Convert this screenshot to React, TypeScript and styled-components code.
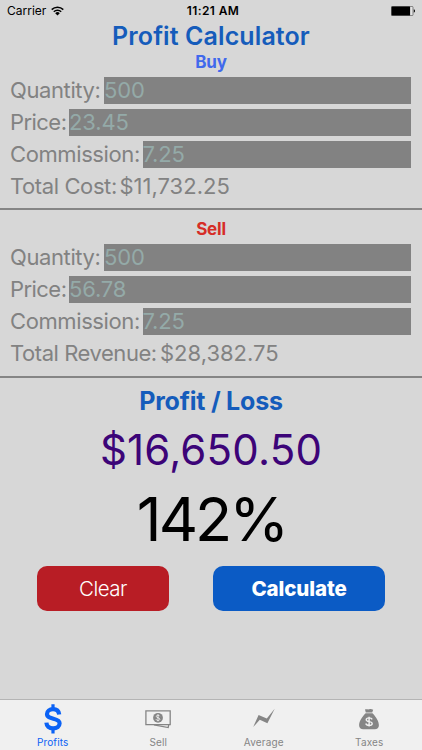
import React, { useState, FC } from "react";
import styled, { createGlobalStyle } from "styled-components";

const GlobalStyle = createGlobalStyle`
  * {
    box-sizing: border-box;
  }
  body {
    margin: 0;
    background: #d7d7d7;
    font-family: Inter, "Liberation Sans", sans-serif;
  }
`;

interface IField {
  label: string;
  value: string;
  labelWidth: number;
  spacing: number;
}

const Screen = styled.div`
  display: flex;
  flex-direction: column;
  width: 422px;
  height: 750px;
  overflow: hidden;
  background: #d7d7d7;
`;

const StatusBar = styled.header`
  display: grid;
  grid-template-columns: 1fr auto 1fr;
  align-items: center;
  height: 22px;
  padding: 0 6px 0 7px;
  font-size: 12px;
  line-height: 22px;
  color: #000;
`;

const Carrier = styled.div`
  display: flex;
  align-items: center;
  gap: 5px;
  letter-spacing: 0;
`;

const Clock = styled.div`
  padding-left: 3px;
  font-weight: 600;
  letter-spacing: 0.4px;
`;

const Battery = styled.div`
  display: flex;
  justify-content: flex-end;
`;

const Title = styled.h1`
  margin: 0;
  height: 29px;
  font-size: 25px;
  font-weight: 600;
  line-height: 29px;
  letter-spacing: 0.1px;
  text-align: center;
  white-space: nowrap;
  color: #155cbb;
`;

const ResultTitle = styled.h2`
  margin: 0;
  height: 29px;
  font-size: 25px;
  font-weight: 700;
  line-height: 29px;
  letter-spacing: -0.2px;
  text-align: center;
  color: #155cbb;
`;

const Heading = styled.h2<{ $color: string }>`
  margin: 0;
  height: 21px;
  padding-top: 1px;
  font-size: 17px;
  font-weight: 700;
  line-height: 21px;
  letter-spacing: -0.2px;
  text-align: center;
  color: ${(p) => p.$color};
`;

const Section = styled.section<{ $top: number; $bottom: number }>`
  padding: ${(p) => p.$top}px 0 ${(p) => p.$bottom}px;
  border-bottom: 2px solid #858585;
`;

const Rows = styled.div`
  display: flex;
  flex-direction: column;
  gap: 5px;
  padding: 5px 11px 0 10px;
`;

const Row = styled.div`
  display: flex;
  height: 27px;
  font-size: 22px;
  line-height: 27px;
  white-space: nowrap;
  color: #828282;
`;

const Label = styled.span<{ $width: number; $spacing: number }>`
  flex: none;
  width: ${(p) => p.$width}px;
  letter-spacing: ${(p) => p.$spacing}px;
`;

const Input = styled.span`
  flex: 1;
  background: #828282;
  color: #94aaa8;
  letter-spacing: -0.15px;
`;

const Total = styled.span`
  letter-spacing: 0;
`;

const Result = styled.section`
  display: flex;
  flex-direction: column;
  padding-top: 9px;
`;

const Amount = styled.div`
  height: 67px;
  font-size: 42px;
  line-height: 67px;
  letter-spacing: 0.2px;
  text-align: center;
  color: #3c0478;
`;

const Percent = styled.div`
  height: 72px;
  padding-left: 1px;
  font-size: 61px;
  line-height: 72px;
  letter-spacing: -3px;
  text-align: center;
  color: #000;
`;

const Buttons = styled.div`
  display: flex;
  justify-content: space-between;
  padding: 11px 37px 0;
`;

const Button = styled.button<{ $primary?: boolean }>`
  width: ${(p) => (p.$primary ? 172 : 132)}px;
  height: 45px;
  padding: 0;
  border: 0;
  border-radius: 10px;
  background: ${(p) => (p.$primary ? "#0b5bc5" : "#b81d25")};
  color: #fff;
  font-family: inherit;
  font-size: 20.5px;
  font-weight: ${(p) => (p.$primary ? 800 : 300)};
  letter-spacing: ${(p) => (p.$primary ? -0.1 : -0.5)}px;
  cursor: pointer;
`;

const TabBar = styled.nav`
  display: grid;
  grid-template-columns: repeat(4, 1fr);
  height: 51px;
  margin-top: auto;
  border-top: 1px solid #b4b4b4;
  background: #f0f0f0;
`;

const Tab = styled.button<{ $active: boolean }>`
  display: flex;
  flex-direction: column;
  align-items: center;
  padding: 3px 0 0;
  border: 0;
  background: transparent;
  color: ${(p) => (p.$active ? "#0b62f5" : "#858585")};
  font-family: inherit;
  font-size: 10px;
  line-height: 15px;
  letter-spacing: 0.15px;
  cursor: pointer;
`;

const TabIcon = styled.svg`
  display: block;
  width: 32px;
  height: 32px;
`;

const Field: FC<IField> = ({ label, value, labelWidth, spacing }) => {
  return (
    <Row>
      <Label $width={labelWidth} $spacing={spacing}>
        {label}
      </Label>
      <Input>{value}</Input>
    </Row>
  );
};

const WifiIcon = () => (
  <svg width="13" height="10" viewBox="0 0 13 10">
    <g fill="none" stroke="#000" strokeWidth="1.5">
      <path d="M.7 3.6a8.2 8.2 0 0 1 11.6 0" />
      <path d="M2.8 5.8a5.2 5.2 0 0 1 7.4 0" />
    </g>
    <path d="M6.5 9.6 4.2 7.2a3.3 3.3 0 0 1 4.6 0z" />
  </svg>
);

const BatteryIcon = () => (
  <svg width="25" height="10" viewBox="0 0 25 10">
    <rect x=".4" y=".4" width="21.6" height="9.2" rx="1" fill="#e4e4e4" stroke="#555" strokeWidth=".7" />
    <rect x=".5" y=".5" width="18.6" height="9" rx=".6" />
    <path d="M22.8 3.3c1.6.3 1.6 3.1 0 3.4z" />
  </svg>
);

const DollarIcon = () => (
  <TabIcon viewBox="0 0 32 32">
    <path
      d="M22.2 11.5C21.8 8.4 19.5 6.2 16 6.2s-6 2-6 4.8c0 6.3 12.6 3.2 12.6 9.3 0 3.1-2.7 5.1-6.5 5.1-4 0-6.5-2.2-6.7-5.7"
      fill="none"
      stroke="currentColor"
      strokeWidth="4.2"
    />
    <path d="M14.4 1.3h3.2v5h-3.2zM14.4 25h3.2v5.6h-3.2z" fill="currentColor" />
  </TabIcon>
);

const CashIcon = () => (
  <TabIcon viewBox="0 0 32 32">
    <g fill="none" stroke="currentColor" strokeWidth="1.3">
      <path d="M3.9 7.9h24.3v13.8H3.9z" />
      <path d="M12 21.9l14.2 2.7.5-2.8" />
    </g>
    <circle cx="16" cy="14.8" r="4.9" fill="currentColor" />
    <path
      d="M17.7 13.2c-.3-.8-1-1-1.8-1s-1.6.4-1.6 1.2c0 1.8 3.5.9 3.5 2.8 0 .8-.8 1.3-1.8 1.3s-1.8-.5-1.9-1.4M16 11.3v7"
      fill="none"
      stroke="#f0f0f0"
      strokeWidth=".9"
    />
  </TabIcon>
);

const TrendIcon = () => (
  <TabIcon viewBox="0 0 32 32">
    <path d="M5.2 24 10.6 11.9l8.2 3.6 7.9-9.8-7.3 14.5-7.6-3.4z" fill="currentColor" />
  </TabIcon>
);

const MoneyBagIcon = () => (
  <TabIcon viewBox="0 0 32 32">
    <path
      d="M12 6.5c1.5-.8 2.8.3 4.2-.2 1.3-.3 2.4-.3 4 .4l-1 2.8h-6.4zM12.6 10.2h6.9c3.3 3.5 6.4 7.7 6.4 12 0 2.9-1.7 4-4.1 4H10.2c-2.4 0-4.1-1.1-4.1-4 0-4.3 3.2-8.5 6.5-12z"
      fill="currentColor"
    />
    <path
      d="M19.2 16.4c-.5-1.1-1.7-1.5-3.2-1.5s-2.8.6-2.8 1.8c0 2.6 6 1.2 6 3.7 0 1.3-1.4 2-3.1 2s-3-.7-3.3-1.9M16.1 13.8v9.6"
      fill="none"
      stroke="#f0f0f0"
      strokeWidth="1.4"
    />
  </TabIcon>
);

function App() {
  const [activeTab, setActiveTab] = useState(0);

  return (
    <>
      <GlobalStyle />
      <Screen>
        <StatusBar>
          <Carrier>
            Carrier
            <WifiIcon />
          </Carrier>
          <Clock>11:21 AM</Clock>
          <Battery>
            <BatteryIcon />
          </Battery>
        </StatusBar>
        <Title>Profit Calculator</Title>
        <Section $top={0} $bottom={8}>
          <Heading $color="#4169ec">Buy</Heading>
          <Rows>
            {buyFields.map((item) => (
              <Field key={item.label} {...item} />
            ))}
            <Row>
              <Label $width={109.5} $spacing={-0.4}>
                Total Cost:
              </Label>
              <Total>$11,732.25</Total>
            </Row>
          </Rows>
        </Section>
        <Section $top={8} $bottom={9}>
          <Heading $color="#d62d26">Sell</Heading>
          <Rows>
            {sellFields.map((item) => (
              <Field key={item.label} {...item} />
            ))}
            <Row>
              <Label $width={150} $spacing={-0.45}>
                Total Revenue:
              </Label>
              <Total>$28,382.75</Total>
            </Row>
          </Rows>
        </Section>
        <Result>
          <ResultTitle>Profit / Loss</ResultTitle>
          <Amount>$16,650.50</Amount>
          <Percent>142%</Percent>
        </Result>
        <Buttons>
          <Button>Clear</Button>
          <Button $primary>Calculate</Button>
        </Buttons>
        <TabBar>
          {tabs.map(({ name, Icon }, id) => (
            <Tab
              key={name}
              $active={id === activeTab}
              onClick={() => setActiveTab(id)}
            >
              <Icon />
              {name}
            </Tab>
          ))}
        </TabBar>
      </Screen>
    </>
  );
}

export default App;

const buyFields: IField[] = [
  { label: "Quantity:", value: "500", labelWidth: 94, spacing: -0.4 },
  { label: "Price:", value: "23.45", labelWidth: 59, spacing: -0.55 },
  { label: "Commission:", value: "7.25", labelWidth: 132.5, spacing: -0.4 },
];

const sellFields: IField[] = [
  { label: "Quantity:", value: "500", labelWidth: 94, spacing: -0.4 },
  { label: "Price:", value: "56.78", labelWidth: 59, spacing: -0.55 },
  { label: "Commission:", value: "7.25", labelWidth: 132.5, spacing: -0.4 },
];

const tabs = [
  { name: "Profits", Icon: DollarIcon },
  { name: "Sell", Icon: CashIcon },
  { name: "Average", Icon: TrendIcon },
  { name: "Taxes", Icon: MoneyBagIcon },
];
